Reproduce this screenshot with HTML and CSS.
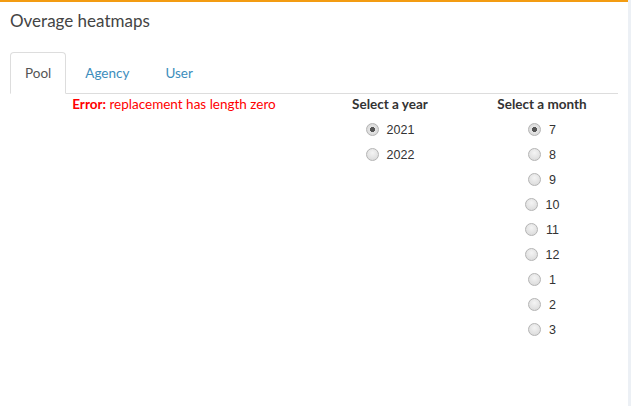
FILE: index.html
```html
<!DOCTYPE html>
<html>
<head>
<meta charset="utf-8">
<link rel="stylesheet" href="styles.css">
</head>
<body>
<div class="box">
  <h3 class="box-title">Overage heatmaps</h3>
  <div class="box-body">
    <ul class="tabs">
      <li class="tab active">Pool</li>
      <li class="tab">Agency</li>
      <li class="tab">User</li>
    </ul>
    <div class="tab-content">
      <div class="col-plot">
        <div class="error"><b>Error:</b> replacement has length zero</div>
      </div>
      <div class="col-select year">
        <div class="label">Select a year</div>
        <label class="radio"><input type="radio" name="y" checked><span>2021</span></label>
        <label class="radio"><input type="radio" name="y"><span>2022</span></label>
      </div>
      <div class="col-select month">
        <div class="label">Select a month</div>
        <label class="radio"><input type="radio" name="m" checked><span>7</span></label>
        <label class="radio"><input type="radio" name="m"><span>8</span></label>
        <label class="radio"><input type="radio" name="m"><span>9</span></label>
        <label class="radio"><input type="radio" name="m"><span>10</span></label>
        <label class="radio"><input type="radio" name="m"><span>11</span></label>
        <label class="radio"><input type="radio" name="m"><span>12</span></label>
        <label class="radio"><input type="radio" name="m"><span>1</span></label>
        <label class="radio"><input type="radio" name="m"><span>2</span></label>
        <label class="radio"><input type="radio" name="m"><span>3</span></label>
      </div>
    </div>
  </div>
</div>
</body>
</html>
```

FILE: styles.css
```css
html, body {
  margin: 0;
  padding: 0;
  height: 100%;
}
body {
  background: #ecf0f5;
  font-family: Lato, "Open Sans", sans-serif;
  color: #333;
}
.box {
  width: 628px;
  height: 406px;
  box-sizing: border-box;
  background: #fff;
  border-top: 2px solid #f39c12;
}
.box-title {
  margin: 0;
  padding: 9px 10px 0 10px;
  height: 28px;
  font-size: 17px;
  font-weight: 400;
  line-height: 20px;
  color: #444;
}
.box-body {
  padding: 13px 10px 0 10px;
}
.tabs {
  list-style: none;
  margin: 0;
  padding: 0;
  display: flex;
  width: 608px;
  border-bottom: 1px solid #ddd;
  height: 41px;
}
.tab {
  padding: 0 16px 0 18px;
  line-height: 41px;
  font-size: 13.5px;
  color: #3c8dbc;
  border: 1px solid transparent;
  border-radius: 4px 4px 0 0;
  margin-bottom: -1px;
}
.tab.active {
  color: #555;
  background: #fff;
  border-color: #ddd;
  border-bottom-color: #fff;
  padding: 0 14px;
}
.tab-content {
  display: flex;
}
.col-plot {
  width: 328px;
  text-align: center;
}
.error {
  color: #ff0000;
  font-size: 13.5px;
  line-height: 20px;
}
.col-select {
  width: 104px;
  display: flex;
  flex-direction: column;
  align-items: center;
}
.month {
  margin-left: 48px;
}
.label {
  font-weight: 700;
  font-size: 13.5px;
  line-height: 20px;
  color: #333;
  margin-bottom: 3px;
}
.radio {
  display: flex;
  align-items: center;
  height: 25px;
  font-family: "Liberation Sans", Arial, sans-serif;
  font-size: 12.5px;
  color: #333;
}
.radio input {
  appearance: none;
  -webkit-appearance: none;
  width: 13px;
  height: 13px;
  margin: 0 8px 0 0;
  border-radius: 50%;
  border: 1px solid #b4b4b4;
  background: radial-gradient(circle at 50% 35%, #f4f4f4, #d6d6d6);
  box-sizing: border-box;
}
.radio input:checked {
  background: radial-gradient(circle, #555 0 2.3px, #e4e4e4 2.8px, #d2d2d2 100%);
}
```
